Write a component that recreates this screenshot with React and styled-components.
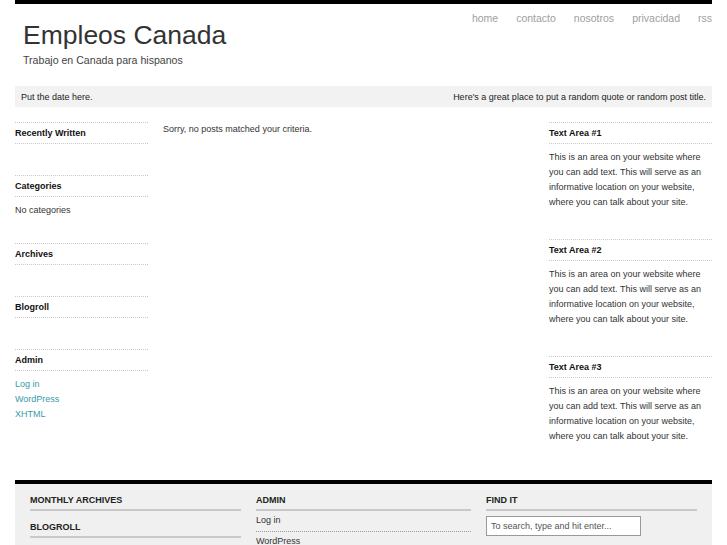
import React from "react";
import styled, { createGlobalStyle } from "styled-components";

const Global = createGlobalStyle`
  html, body { margin: 0; padding: 0; background: #fff; }
  body { font-family: "Liberation Sans", Arial, sans-serif; color: #333; }
  ul { list-style: none; margin: 0; padding: 0; }
  a { text-decoration: none; }
`;

const Page = styled.div`
  width: 697px;
  margin: 0 auto;
`;

const TopBar = styled.div`
  height: 4px;
  background: #000;
`;

const Header = styled.header`
  display: flex;
  justify-content: space-between;
  align-items: flex-start;
`;

const Brand = styled.div`
  padding: 16px 0 0 8px;
`;

const Title = styled.h1`
  margin: 0;
  font-size: 26.5px;
  line-height: 30px;
  font-weight: normal;
  color: #333;
`;

const Tagline = styled.div`
  margin-top: 3px;
  font-size: 10.6px;
  line-height: 14px;
  color: #444;
`;

const Nav = styled.nav`
  display: flex;
  gap: 18px;
  padding-top: 7px;
`;

const NavLink = styled.a`
  font-size: 10.5px;
  line-height: 14px;
  color: #a0a0a0;
`;

const Band = styled.div`
  margin-top: 19px;
  height: 21px;
  background: #f2f2f2;
  display: flex;
  justify-content: space-between;
  align-items: center;
  padding: 0 6px;
  font-size: 9px;
  color: #222;
`;

const Columns = styled.div`
  display: flex;
  align-items: flex-start;
  margin-top: 15px;
  padding-bottom: 7px;
`;

const Sidebar = styled.aside`
  width: ${(p) => p.$w}px;
  flex: none;
`;

const Main = styled.main`
  flex: 1;
  margin: 0 15px;
  font-size: 9px;
  line-height: 15px;
  color: #333;
`;

const Widget = styled.section`
  margin-bottom: ${(p) => p.$gap}px;
`;

const WidgetTitle = styled.h3`
  margin: 0;
  border-top: 1px dotted #c8c8c8;
  border-bottom: 1px dotted #c8c8c8;
  font-size: 9px;
  line-height: 20px;
  font-weight: bold;
  color: #111;
`;

const WidgetList = styled.ul`
  padding-top: 6px;
  font-size: 9px;
  line-height: 15px;
  color: #333;
`;

const SideLink = styled.a`
  color: #3a9aa8;
`;

const WidgetText = styled.p`
  margin: 0;
  padding-top: 6px;
  font-size: 9px;
  line-height: 15px;
  color: #333;
`;

const Footer = styled.footer`
  border-top: 4px solid #000;
  background: #f0f0f0;
  padding: 10px 15px 20px;
  display: grid;
  grid-template-columns: 211px 215px 211px;
  column-gap: 15px;
`;

const FootCol = styled.div``;

const FootTitle = styled.h4`
  margin: ${(p) => (p.$first ? 0 : "10px 0 0")};
  font-size: 9px;
  line-height: 12px;
  padding-bottom: 3px;
  border-bottom: 2px solid #c9c9c9;
  text-transform: uppercase;
  color: #222;
  font-weight: bold;
`;

const FootItem = styled.li`
  padding: 3px 0 5px;
  font-size: 9px;
  line-height: 12px;
  border-bottom: 1px dotted #999;
  color: #333;
`;

const SearchBox = styled.div`
  margin-top: 5px;
  width: 155px;
  height: 20px;
  box-sizing: border-box;
  border: 1px solid #999;
  background: #fff;
  padding: 0 4px;
  font-size: 9px;
  line-height: 18px;
  color: #555;
`;

const textArea =
  "This is an area on your website where you can add text. This will serve as an informative location on your website, where you can talk about your site.";

export default function App() {
  return (
    <Page>
      <Global />
      <TopBar />
      <Header>
        <Brand>
          <Title>Empleos Canada</Title>
          <Tagline>Trabajo en Canada para hispanos</Tagline>
        </Brand>
        <Nav>
          <NavLink>home</NavLink>
          <NavLink>contacto</NavLink>
          <NavLink>nosotros</NavLink>
          <NavLink>privacidad</NavLink>
          <NavLink>rss</NavLink>
        </Nav>
      </Header>
      <Band>
        <span>Put the date here.</span>
        <span>Here's a great place to put a random quote or random post title.</span>
      </Band>
      <Columns>
        <Sidebar $w={133}>
          <Widget $gap={25}>
            <WidgetTitle>Recently Written</WidgetTitle>
            <WidgetList />
          </Widget>
          <Widget $gap={25}>
            <WidgetTitle>Categories</WidgetTitle>
            <WidgetList>
              <li>No categories</li>
            </WidgetList>
          </Widget>
          <Widget $gap={25}>
            <WidgetTitle>Archives</WidgetTitle>
            <WidgetList />
          </Widget>
          <Widget $gap={25}>
            <WidgetTitle>Blogroll</WidgetTitle>
            <WidgetList />
          </Widget>
          <Widget $gap={25}>
            <WidgetTitle>Admin</WidgetTitle>
            <WidgetList>
              <li><SideLink>Log in</SideLink></li>
              <li><SideLink>WordPress</SideLink></li>
              <li><SideLink>XHTML</SideLink></li>
            </WidgetList>
          </Widget>
        </Sidebar>
        <Main>Sorry, no posts matched your criteria.</Main>
        <Sidebar $w={163}>
          {[1, 2, 3].map((n) => (
            <Widget $gap={29} key={n}>
              <WidgetTitle>Text Area #{n}</WidgetTitle>
              <WidgetText>{textArea}</WidgetText>
            </Widget>
          ))}
        </Sidebar>
      </Columns>
      <Footer>
        <FootCol>
          <FootTitle $first>Monthly Archives</FootTitle>
          <FootTitle>Blogroll</FootTitle>
        </FootCol>
        <FootCol>
          <FootTitle $first>Admin</FootTitle>
          <ul>
            <FootItem>Log in</FootItem>
            <FootItem>WordPress</FootItem>
            <FootItem>XHTML</FootItem>
          </ul>
        </FootCol>
        <FootCol>
          <FootTitle $first>Find It</FootTitle>
          <SearchBox>To search, type and hit enter...</SearchBox>
        </FootCol>
      </Footer>
    </Page>
  );
}
